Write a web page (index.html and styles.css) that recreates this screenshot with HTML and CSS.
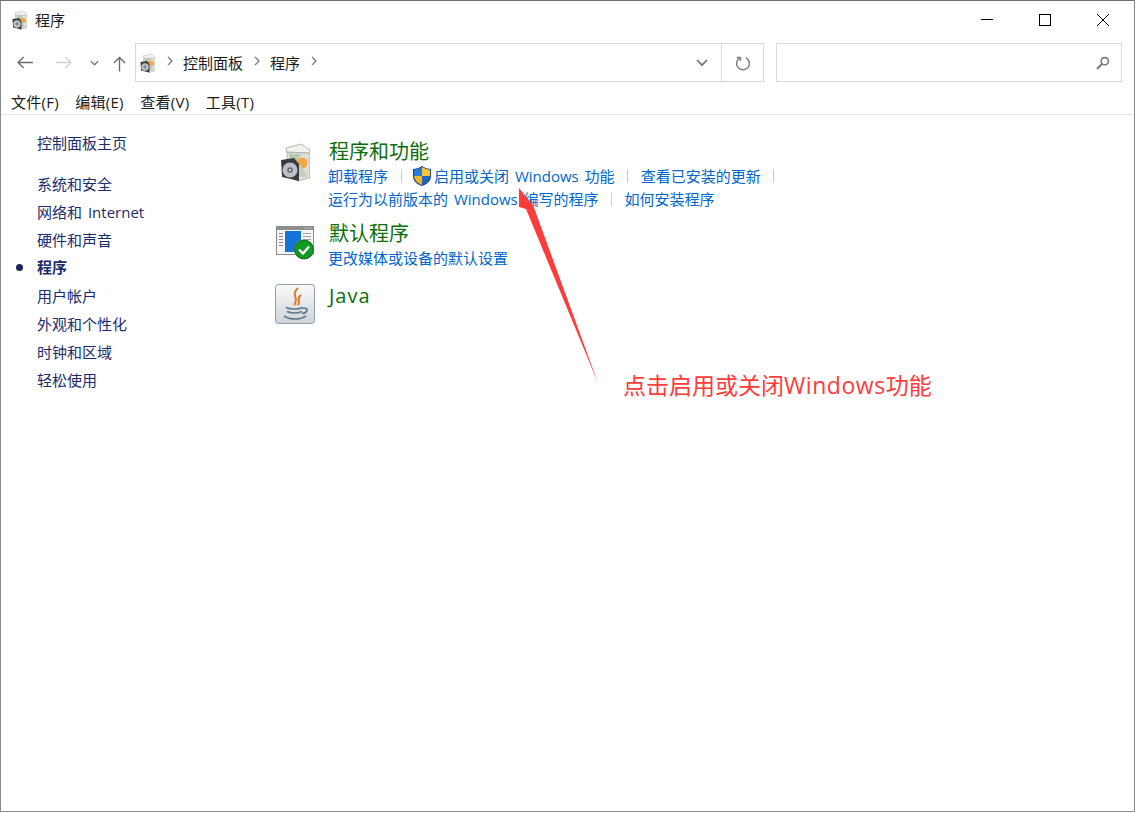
FILE: index.html
```html
<!DOCTYPE html>
<html lang="zh-CN">
<head>
    <meta charset="UTF-8">
    <title>程序</title>
    <link rel="stylesheet" href="styles.css">
</head>
<body>
    <svg class="defs" width="0" height="0">
        <defs>
            <symbol id="ico-programs" viewBox="6 2 30 40">
                <path d="M13 12 L36 13 L35.5 38 L24 41 L13 36 Z" fill="#dededa" stroke="#a8a8a2" stroke-width=".7"/>
                <path d="M12 8 L27 4 L36 10 L36 13 L13 12 Z" fill="#f1f1ee" stroke="#a5a5a0" stroke-width=".8"/>
                <path d="M15 14 L27 14 L19 30 Z" fill="#b7c9aa"/>
                <circle cx="28" cy="23" r="5.5" fill="#f0a845"/>
                <path d="M20 36 L26 24 L33 37 Z" fill="#c3cdb9"/>
                <path d="M7 20 L20 18 L25 24 L25 41 L8 37 Z" fill="#3a3e42"/>
                <circle cx="16" cy="30" r="7.5" fill="#bac0c5"/>
                <circle cx="16" cy="30" r="2.8" fill="#666c72"/>
                <circle cx="16" cy="30" r="1.1" fill="#e8e8e8"/>
            </symbol>
            <symbol id="ico-shield" viewBox="0 0 20 22">
                <path d="M10 1 C7 3 4 4 1 4 L1 11 C1 16 5 19.5 10 21 C15 19.5 19 16 19 11 L19 4 C16 4 13 3 10 1 Z" fill="#17458a"/>
                <path d="M10 2 C12.5 3.5 15.5 4.6 18 4.8 L18 11 L10 11 Z" fill="#f6c53a"/>
                <path d="M10 11 L2 11 C2.5 15.5 6 18.5 10 20 Z" fill="#f0b52c"/>
                <path d="M10 2 C7.5 3.5 4.5 4.6 2 4.8 L2 11 L10 11 Z" fill="#2a7ad4"/>
                <path d="M10 11 L18 11 C17.5 15.5 14 18.5 10 20 Z" fill="#1f66bd"/>
            </symbol>
        </defs>
    </svg>

    <div class="window">
        <header class="titlebar">
            <svg class="title-icon"><use href="#ico-programs"/></svg>
            <span class="title-text">程序</span>
            <div class="caption">
                <svg class="cap-btn" viewBox="0 0 58 20"><path d="M23 9.5 H35" stroke="#000" fill="none"/></svg>
                <svg class="cap-btn" viewBox="0 0 58 20"><rect x="23.5" y="4.5" width="11" height="11" stroke="#000" fill="none"/></svg>
                <svg class="cap-btn" viewBox="0 0 58 20"><path d="M23 4 L35 16 M35 4 L23 16" stroke="#000" fill="none"/></svg>
            </div>
        </header>

        <nav class="navbar">
            <div class="nav-btns">
                <svg class="nav-back" viewBox="0 0 18 14"><path d="M1 7 H17 M7 1 L1 7 L7 13" stroke="#6d6d6d" stroke-width="1.5" fill="none"/></svg>
                <svg class="nav-forward" viewBox="0 0 18 14"><path d="M1 7 H17 M11 1 L17 7 L11 13" stroke="#d4d4d4" stroke-width="1.5" fill="none"/></svg>
                <svg class="nav-recent" viewBox="0 0 10 6"><path d="M1 1 L5 5 L9 1" stroke="#7a7a7a" stroke-width="1.5" fill="none"/></svg>
                <svg class="nav-up" viewBox="0 0 14 16"><path d="M7 16 V1 M1 7 L7 1 L13 7" stroke="#6d6d6d" stroke-width="1.5" fill="none"/></svg>
            </div>
            <div class="address">
                <svg class="crumb-icon"><use href="#ico-programs"/></svg>
                <svg class="crumb-sep" viewBox="0 0 6 10"><path d="M1 1 L5 5 L1 9" stroke="#7a7a7a" stroke-width="1.3" fill="none"/></svg>
                <span class="crumb">控制面板</span>
                <svg class="crumb-sep" viewBox="0 0 6 10"><path d="M1 1 L5 5 L1 9" stroke="#7a7a7a" stroke-width="1.3" fill="none"/></svg>
                <span class="crumb">程序</span>
                <svg class="crumb-sep" viewBox="0 0 6 10"><path d="M1 1 L5 5 L1 9" stroke="#7a7a7a" stroke-width="1.3" fill="none"/></svg>
                <svg class="addr-drop" viewBox="0 0 12 8"><path d="M1 1 L6 6 L11 1" stroke="#6d6d6d" stroke-width="1.6" fill="none"/></svg>
                <div class="addr-refresh">
                    <svg viewBox="0 0 16 16" width="16" height="16"><path d="M5.2 2.6 A6.4 6.4 0 1 0 10.8 2.6 M5.4 6 V2.4 H1.6" stroke="#7d7d7d" stroke-width="1.5" fill="none"/></svg>
                </div>
            </div>
            <div class="search">
                <svg viewBox="0 0 14 14" width="14" height="14"><circle cx="8.8" cy="5.2" r="3.6" stroke="#777" stroke-width="1.6" fill="none"/><path d="M6.2 7.8 L1 13" stroke="#777" stroke-width="2" fill="none"/></svg>
            </div>
        </nav>

        <div class="menubar">
            <span>文件(F)</span>
            <span>编辑(E)</span>
            <span>查看(V)</span>
            <span>工具(T)</span>
        </div>

        <div class="content">
            <aside class="sidebar">
                <a class="side-home">控制面板主页</a>
                <a>系统和安全</a>
                <a>网络和 Internet</a>
                <a>硬件和声音</a>
                <a class="current">程序</a>
                <a>用户帐户</a>
                <a>外观和个性化</a>
                <a>时钟和区域</a>
                <a>轻松使用</a>
            </aside>

            <main class="panel">
                <section class="category cat-programs">
                    <svg class="cat-icon"><use href="#ico-programs"/></svg>
                    <div class="cat-body">
                        <h2>程序和功能</h2>
                        <div class="links">
                            <a>卸载程序</a><i></i>
                            <svg class="shield"><use href="#ico-shield"/></svg>
                            <a>启用或关闭 Windows 功能</a><i></i>
                            <a>查看已安装的更新</a><i></i>
                        </div>
                        <div class="links">
                            <a>运行为以前版本的 Windows 编写的程序</a><i></i>
                            <a>如何安装程序</a>
                        </div>
                    </div>
                </section>

                <section class="category cat-default">
                    <svg class="cat-icon" viewBox="0 0 40 36">
                        <rect x="0.5" y="1.5" width="37" height="28" fill="#f6f6f6" stroke="#8b8b8b"/>
                        <path d="M1 2 H37 V5 H1 Z" fill="#8f8f8f"/>
                        <path d="M29 3 H36" stroke="#d0d0d0" stroke-dasharray="2 1"/>
                        <path d="M3 8.5 H7 M3 11.5 H7 M3 14.5 H7 M3 17.5 H7 M3 20.5 H7" stroke="#8a8a8a"/>
                        <path d="M27 8.5 H35 M27 11.5 H35 M27 14.5 H35" stroke="#a0a0a0"/>
                        <rect x="9" y="6" width="16" height="21" fill="#1474d8"/>
                        <circle cx="28" cy="24.5" r="10" fill="#fff"/>
                        <circle cx="28" cy="24.5" r="9.5" fill="#0f9a20" stroke="#0b5e14"/>
                        <path d="M23 24.5 L27 28.5 L33 21.5" stroke="#fff" stroke-width="2.4" fill="none"/>
                    </svg>
                    <div class="cat-body">
                        <h2>默认程序</h2>
                        <div class="links">
                            <a>更改媒体或设备的默认设置</a>
                        </div>
                    </div>
                </section>

                <section class="category cat-java">
                    <svg class="cat-icon" viewBox="0 0 40 40">
                        <defs>
                            <linearGradient id="java-bg" x1="0" y1="0" x2="0" y2="1">
                                <stop offset="0" stop-color="#fafafa"/>
                                <stop offset="1" stop-color="#cfd4d8"/>
                            </linearGradient>
                        </defs>
                        <rect x="0.5" y="0.5" width="39" height="39" rx="3" fill="url(#java-bg)" stroke="#8ea0ae"/>
                        <path d="M23 4 C15 11 25 14 19 21 M26 11 C20 15 27 17 22.5 21" stroke="#e2762a" stroke-width="2" fill="none"/>
                        <path d="M11 23.5 C15 25.5 24 25.5 28 23.5 M12 27.5 C16 29.5 23 29.5 27 27.5 M9 32 C15 36 25 36 31 32 M28 24.5 C34 23 33 29 27 29.5" stroke="#5f788c" stroke-width="1.7" fill="none"/>
                    </svg>
                    <div class="cat-body">
                        <h2>Java</h2>
                    </div>
                </section>
            </main>
        </div>
    </div>

    <!-- red callout drawn on top of the window -->
    <svg class="callout-arrow" viewBox="0 0 100 210">
        <path d="M9 8 L23 25 L88 203 L16 29 L9 27 Z" fill="#ff3b3b"/>
    </svg>
    <div class="callout-text">点击启用或关闭<span class="callout-latin">Windows</span>功能</div>
</body>
</html>
```

FILE: styles.css
```css
html, body {
    margin: 0;
    padding: 0;
    height: 100%;
    background: #fff;
}
body {
    font-family: "Open Sans", "Noto Sans CJK SC", sans-serif;
    font-size: 15px;
    color: #1a1a1a;
    overflow: hidden;
}
.defs {
    display: block;
    height: 0;
}
.window {
    height: 812px;
    border-top: 1px solid #6f6f6f;
    border-left: 1px solid #8a8a8a;
    border-right: 1px solid #8a8a8a;
    border-bottom: 1px solid #8a8a8a;
    box-sizing: border-box;
    display: flex;
    flex-direction: column;
}

/* title bar */
.titlebar {
    height: 38px;
    display: flex;
    align-items: center;
    padding-left: 11px;
    flex: none;
}
.title-icon {
    width: 15px;
    height: 20px;
}
.title-text {
    margin-left: 8px;
    font-size: 15px;
    line-height: 36px;
}
.caption {
    margin-left: auto;
    display: flex;
    margin-right: 2px;
}
.cap-btn {
    width: 58px;
    height: 20px;
}

/* back / forward and address */
.navbar {
    height: 39px;
    margin-top: 4px;
    display: flex;
    flex: none;
    padding-right: 12px;
}
.nav-btns {
    width: 134px;
    display: flex;
    align-items: center;
    flex: none;
    padding-left: 16px;
    box-sizing: border-box;
}
.nav-back, .nav-forward {
    width: 17px;
    height: 13px;
}
.nav-forward {
    margin-left: 21px;
}
.nav-recent {
    width: 9px;
    height: 6px;
    margin-left: 18px;
    margin-top: 1px;
}
.nav-up {
    width: 13px;
    height: 16px;
    margin-left: 14px;
    margin-top: 3px;
}
.address {
    width: 629px;
    box-sizing: border-box;
    border: 1px solid #d9d9d9;
    display: flex;
    align-items: center;
    padding-left: 4px;
    flex: none;
}
.crumb-icon {
    width: 15px;
    height: 20px;
}
.crumb-sep {
    width: 6px;
    height: 10px;
    margin-left: 12px;
    margin-top: -3px;
}
.crumb {
    margin-left: 10px;
    font-size: 15px;
}
.crumb + .crumb-sep {
    margin-left: 11px;
}
.addr-drop {
    width: 12px;
    height: 8px;
    margin-left: auto;
    margin-right: 13px;
}
.addr-refresh {
    width: 41px;
    height: 100%;
    border-left: 1px solid #d9d9d9;
    display: flex;
    align-items: center;
    justify-content: center;
}
.search {
    margin-left: 12px;
    flex: 1;
    border: 1px solid #d9d9d9;
    display: flex;
    align-items: center;
    justify-content: flex-end;
    padding-right: 11px;
}

/* menu */
.menubar {
    height: 33px;
    flex: none;
    display: flex;
    align-items: center;
    gap: 16.5px;
    padding-left: 10px;
    padding-top: 6px;
    box-sizing: border-box;
    font-size: 15px;
    letter-spacing: 0.25px;
    border-bottom: 1px solid #e3e3e3;
}

/* page body */
.content {
    flex: 1;
    display: flex;
}
.sidebar {
    width: 274px;
    flex: none;
    padding: 14px 0 0 36px;
    box-sizing: border-box;
    display: flex;
    flex-direction: column;
    color: #1c2c6b;
    font-size: 15px;
    word-spacing: 2px;
}
.sidebar a {
    height: 28px;
    line-height: 28px;
}
.sidebar .side-home {
    margin-bottom: 13px;
}
.sidebar .current {
    font-weight: bold;
    position: relative;
    line-height: 26px;
}
.sidebar .current::before {
    content: "";
    position: absolute;
    left: -21px;
    top: 10px;
    width: 7px;
    height: 7px;
    border-radius: 50%;
    background: #1c2460;
}
.panel {
    flex: 1;
    display: flex;
    flex-direction: column;
}
.category {
    display: flex;
}
.cat-icon {
    width: 40px;
    height: 40px;
    flex: none;
}
.cat-body {
    margin-left: 14px;
}
.category h2 {
    margin: 0;
    font-weight: normal;
    font-size: 20px;
    line-height: 25px;
    color: #0b6e0b;
}
.links {
    display: flex;
    align-items: center;
    height: 23px;
    color: #0066cc;
    font-size: 15px;
    word-spacing: 2px;
    white-space: nowrap;
    margin-left: -1px;
}
.links i {
    width: 1px;
    height: 14px;
    background: #cfcfcf;
    margin: 0 12.5px;
}
.shield {
    width: 20px;
    height: 22px;
    margin-left: -2px;
    margin-right: 2px;
}
.cat-programs {
    margin-top: 24px;
}
.cat-programs .cat-icon {
    width: 30px;
    height: 40px;
    margin: 3px 5px 0 5px;
}
.cat-default {
    margin-top: 11px;
}
.cat-default .cat-icon {
    width: 40px;
    height: 36px;
    margin-top: 4px;
    margin-left: 1px;
    margin-right: -1px;
}
.cat-java {
    margin-top: 14px;
}
.cat-java h2 {
    letter-spacing: 1px;
}
.cat-java .cat-icon {
    margin-top: 1px;
}

/* callout */
.callout-arrow {
    position: absolute;
    left: 510px;
    top: 180px;
    width: 100px;
    height: 210px;
}
.callout-text {
    position: absolute;
    left: 623px;
    top: 369px;
    font-size: 23px;
    line-height: 32px;
    color: #ff3b3b;
    white-space: nowrap;
}
.callout-latin {
    letter-spacing: 0.55px;
}
```
